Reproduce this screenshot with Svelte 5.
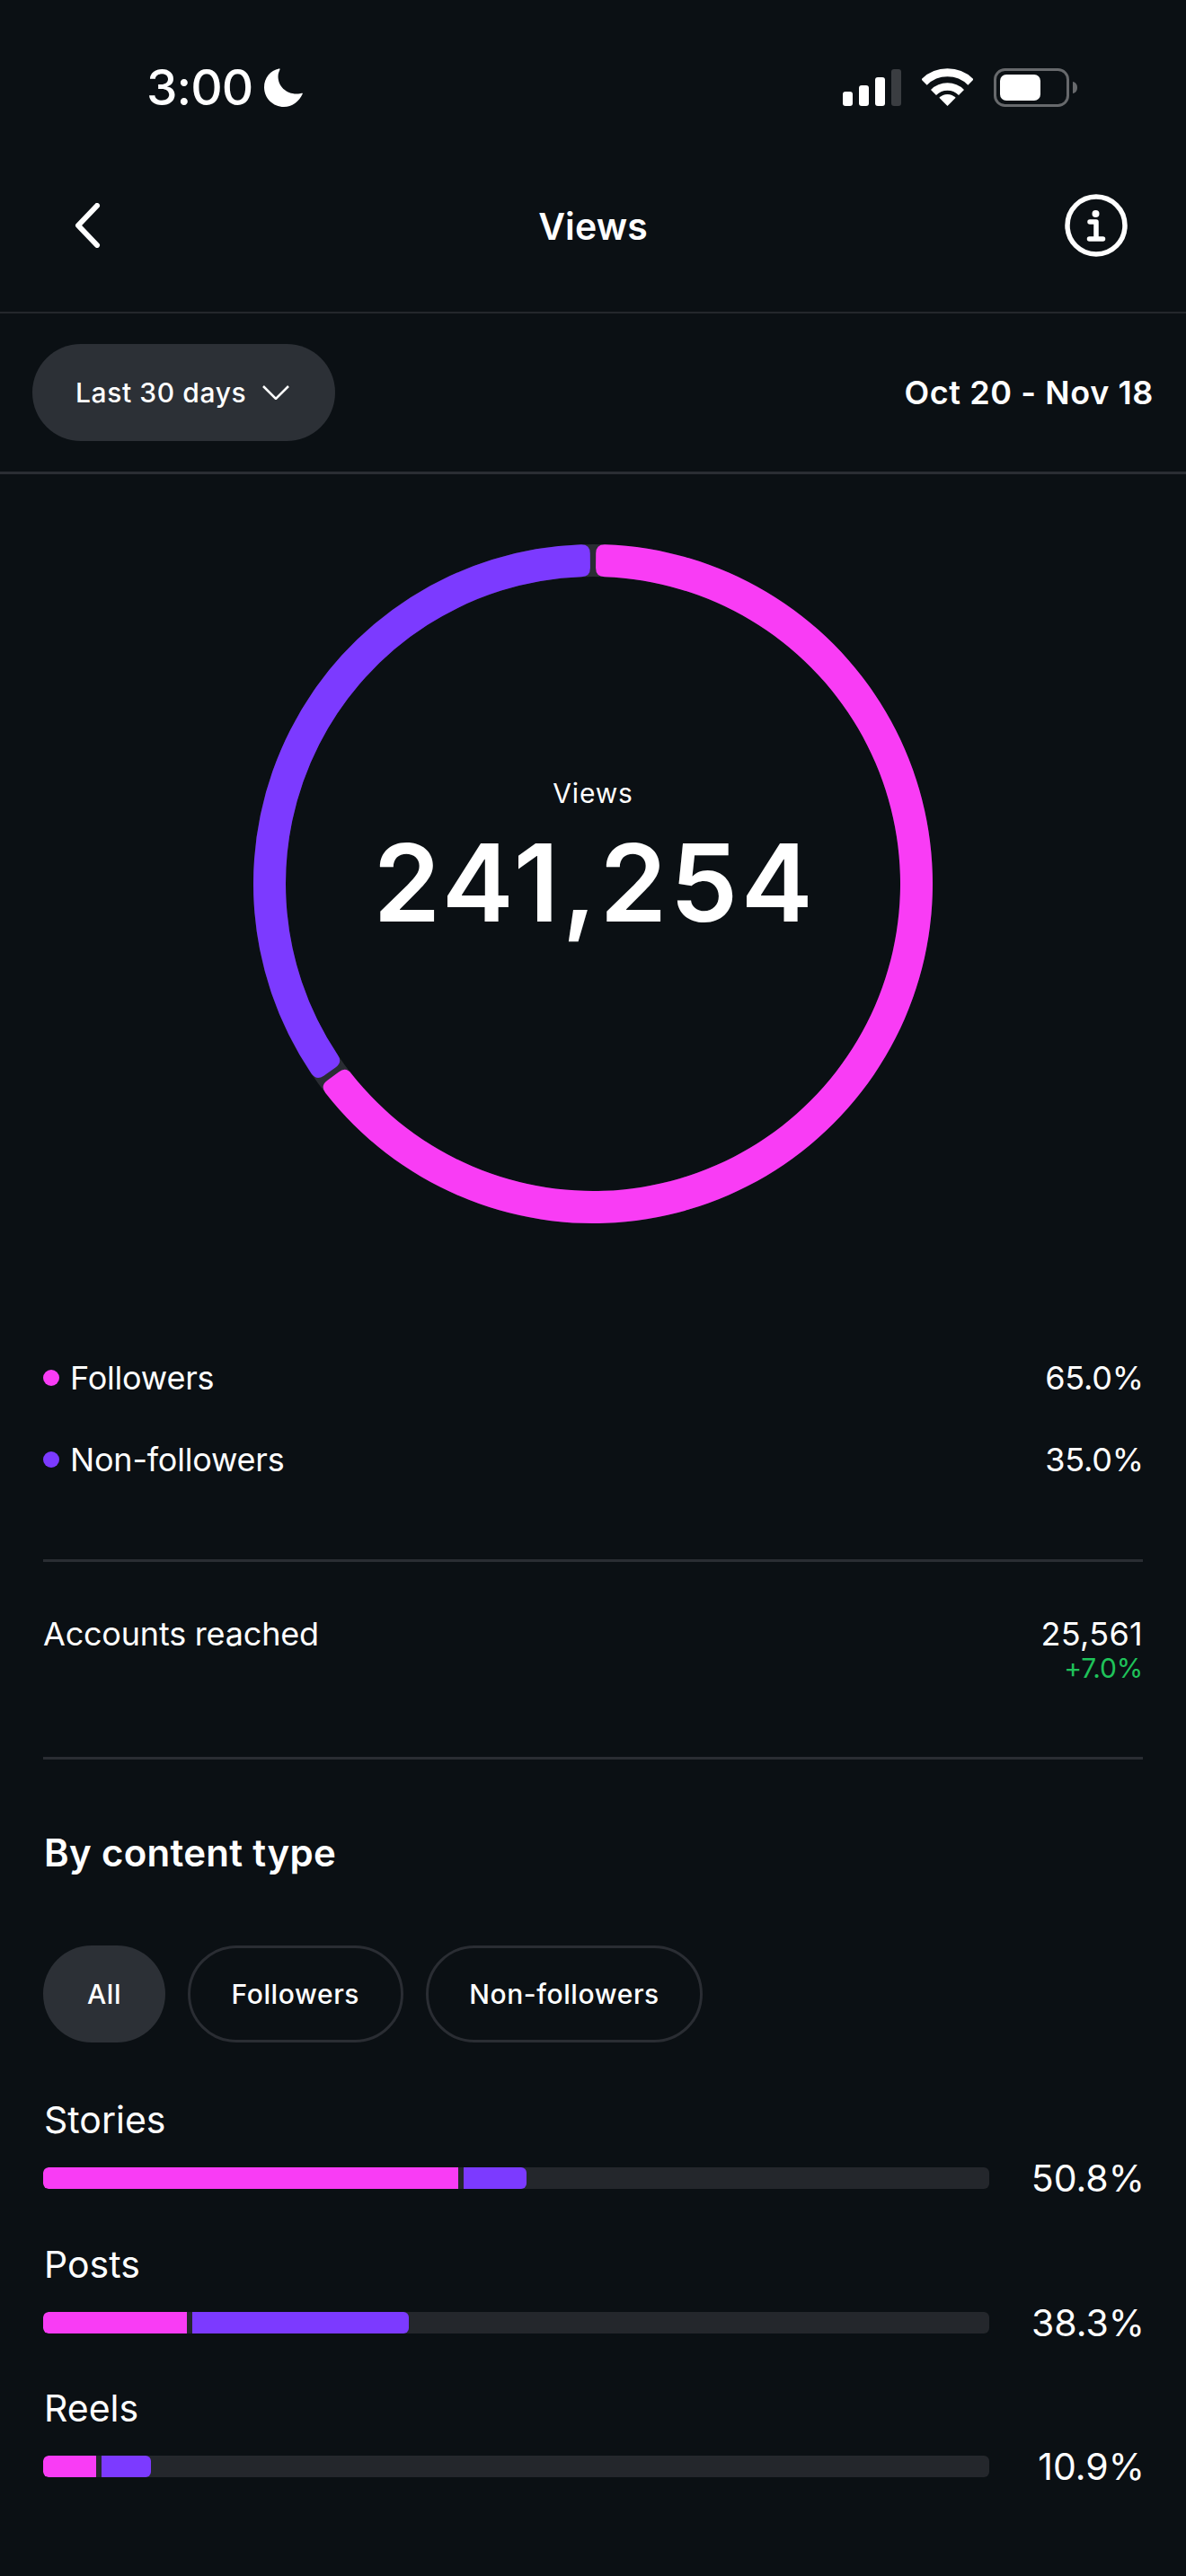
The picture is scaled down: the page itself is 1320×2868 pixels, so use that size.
<script>
  const C = 378, Ro = 378, Ri = 342, r = 10;
  const P = (R, a) => {
    const t = (a * Math.PI) / 180;
    return `${(C + R * Math.sin(t)).toFixed(2)} ${(C - R * Math.cos(t)).toFixed(2)}`;
  };
  function seg(a0, a1) {
    const cO = (r / Ro) * (180 / Math.PI), cI = (r / Ri) * (180 / Math.PI);
    const large = a1 - a0 > 180 ? 1 : 0;
    return `M${P(Ro, a0 + cO)}A${Ro} ${Ro} 0 ${large} 1 ${P(Ro, a1 - cO)}Q${P(Ro, a1)} ${P(Ro - r, a1)}L${P(Ri + r, a1)}Q${P(Ri, a1)} ${P(Ri, a1 - cI)}A${Ri} ${Ri} 0 ${large} 0 ${P(Ri, a0 + cI)}Q${P(Ri, a0)} ${P(Ri + r, a0)}L${P(Ro - r, a0)}Q${P(Ro, a0)} ${P(Ro, a0 + cO)}Z`;
  }
  const pinkSeg = seg(0.5, 233.5);
  const purpleSeg = seg(234.5, 359.5);
  const legend = [
    { label: 'Followers', value: '65.0%', cls: 'pink' },
    { label: 'Non-followers', value: '35.0%', cls: 'purple' }
  ];
  const rows = [
    { label: 'Stories', value: '50.8%', a: 462, b: 70 },
    { label: 'Posts', value: '38.3%', a: 160, b: 241 },
    { label: 'Reels', value: '10.9%', a: 59, b: 55 }
  ];
</script>

<main class="screen">
  <header class="status">
    <div class="time">
      <span>3:00</span>
      <svg width="43" height="43" viewBox="0 0 43 43"><path fill="#fff" d="M16.5.5C7 2.5 0 10.5 0 21c0 12.5 10 22 22 22 9 0 17-6 21-15-1.500-1-3 .5-7 .5-11.500 0-20.500-8.500-20.500-19.500 0-3.500 1.500-6 2-7.500 0-1-.500-1.500-1-1z"/></svg>
    </div>
    <div class="sys">
      <svg class="signal" width="65" height="41" viewBox="0 0 65 41">
        <rect x="0" y="25" width="11" height="16" rx="3" fill="#fff"/>
        <rect x="18" y="18" width="11" height="23" rx="3" fill="#fff"/>
        <rect x="36" y="9" width="11" height="32" rx="3" fill="#fff"/>
        <rect x="54" y="0" width="11" height="41" rx="3" fill="#3a3d41"/>
      </svg>
      <svg class="wifi" width="57" height="42" viewBox="0 0 57 42" fill="none">
        <path d="M2.500 15.500A37 37 0 0 1 54.500 15.500" stroke="#fff" stroke-width="9"/>
        <path d="M13 27A22 22 0 0 1 44 27" stroke="#fff" stroke-width="8.500"/>
        <path d="M28.500 42L19.300 32.800A13 13 0 0 1 37.700 32.800Z" fill="#fff"/>
      </svg>
      <svg class="battery" width="93" height="43" viewBox="0 0 93 43">
        <rect x="1.500" y="1.500" width="81" height="40" rx="11" fill="none" stroke="#67696c" stroke-width="3"/>
        <rect x="7" y="7" width="45" height="29" rx="7" fill="#fff"/>
        <path d="M88 15c3 .5 5 3 5 6.500s-2 6-5 6.500z" fill="#67696c"/>
      </svg>
    </div>
  </header>

  <nav class="nav">
    <svg class="back" width="30" height="50" viewBox="0 0 30 50" fill="none"><path d="M25 3L4 25l21 22" stroke="#fff" stroke-width="6" stroke-linecap="round" stroke-linejoin="round"/></svg>
    <h1>Views</h1>
    <svg class="info" width="70" height="70" viewBox="0 0 70 70" fill="none">
      <circle cx="35" cy="35" r="32" stroke="#fff" stroke-width="5.500"/>
      <circle cx="34.500" cy="22" r="4" fill="#fff"/>
      <path d="M28 31h7v19M27.500 50h15" stroke="#fff" stroke-width="5.500" stroke-linecap="round" stroke-linejoin="round"/>
    </svg>
  </nav>

  <section class="filter">
    <button class="pill select">
      Last 30 days
      <svg width="30" height="16" viewBox="0 0 30 16" fill="none"><path d="M1 1l14 14L29 1" stroke="#fff" stroke-width="2.500"/></svg>
    </button>
    <span class="range">Oct 20 - Nov 18</span>
  </section>

  <section class="ringwrap">
    <div class="ring">
      <svg width="756" height="756" viewBox="0 0 756 756">
        <circle cx="378" cy="378" r="360" fill="none" stroke="#2a2d33" stroke-width="36"/>
        <path d={pinkSeg} class="f-pink"/>
        <path d={purpleSeg} class="f-purple"/>
      </svg>
      <div class="center">
        <span class="c-label">Views</span>
        <span class="c-num">241,254</span>
      </div>
    </div>
  </section>

  <section class="legend">
    {#each legend as l}
      <div class="lrow">
        <span class="lname"><i class="dot {l.cls}"></i>{l.label}</span>
        <span>{l.value}</span>
      </div>
    {/each}
  </section>

  <section class="reach">
    <span>Accounts reached</span>
    <div class="reach-v">
      <span class="reach-num">25,561</span>
      <span class="delta">+7.0%</span>
    </div>
  </section>

  <section class="types">
    <h2>By content type</h2>
    <div class="chips">
      <button class="pill chip active">All</button>
      <button class="pill chip">Followers</button>
      <button class="pill chip">Non-followers</button>
    </div>
    <div class="bars">
      {#each rows as row}
        <div class="bar-row">
          <div class="bar-label">{row.label}</div>
          <div class="bar-line">
            <div class="track">
              <div class="fill pink" style="width:{row.a}px"></div>
              <div class="fill purple" style="width:{row.b}px"></div>
            </div>
            <span class="pct">{row.value}</span>
          </div>
        </div>
      {/each}
    </div>
  </section>
</main>

<style>
  :global(body) { margin: 0; background: #0b1014; }
  .screen {
    width: 1320px; height: 2868px; overflow: hidden; background: #0b1014; color: #fff;
    font-family: Inter, "Liberation Sans", sans-serif; font-size: 36px; letter-spacing: -0.2px; box-sizing: border-box;
  }
  .status {
    height: 154px; padding: 40px 121px 0 163px; box-sizing: border-box;
    display: flex; align-items: center; justify-content: space-between;
  }
  .time { display: flex; align-items: center; gap: 13px; font-size: 55px; font-weight: 500; letter-spacing: -1px; }
  .sys { display: flex; align-items: center; gap: 23px; }
  .nav {
    height: 195px; padding: 0 65px; box-sizing: border-box; display: grid; grid-template-columns: 1fr auto 1fr; align-items: center;
    border-bottom: 2px solid #24272c; 
  }
  .nav h1 { margin: 2px 0 0; font-size: 41px; font-weight: 600; letter-spacing: 0.1px; }
  .back { margin-left: 18px; }
  .info { justify-self: end; margin-top: 1px; }
  .filter {
    height: 179px; padding: 0 36px; box-sizing: border-box; display: flex; align-items: center;
    justify-content: space-between; border-bottom: 3px solid #2a2d33;
  }
  .pill {
    height: 108px; border-radius: 54px; font: inherit; color: #fff; font-size: 30px; font-weight: 500;
    display: inline-flex; align-items: center; box-sizing: border-box; letter-spacing: 0.6px;
  }
  .select { width: 337px; padding: 0 0 0 48px; gap: 18px; background: #2c3036; border: 0; }
  .range { font-size: 36px; font-weight: 600; letter-spacing: 0.6px; }
  .ringwrap { padding-top: 78px; display: flex; justify-content: center; }
  .ring { display: grid; width: 756px; height: 756px; }
  .ring > * { grid-area: 1 / 1; }
  .f-pink { fill: #f93cf5; }
  .f-purple { fill: #7c3aff; }
  .center { display: flex; flex-direction: column; align-items: center; padding-top: 259px; }
  .c-label { font-size: 30px; line-height: 36px; letter-spacing: 0.8px; }
  .c-num { font-size: 120px; font-weight: 600; line-height: 140px; margin-top: 12px; letter-spacing: 3.500px; margin-right: -3.500px; }
  .legend { padding: 126px 47px 0 48px; height: 374px; box-sizing: border-box; }
  .lrow { display: flex; justify-content: space-between; align-items: center; height: 91px; }
  .lname { display: flex; align-items: center; gap: 12px; }
  .dot { width: 18px; height: 18px; border-radius: 50%; }
  .pink { background: #f93cf5; }
  .purple { background: #7c3aff; }
  .reach {
    margin: 0 48px; height: 223px; padding: 58px 0 0 0; box-sizing: border-box; display: flex; justify-content: space-between;
    border-top: 3px solid #2a2d33; border-bottom: 3px solid #2a2d33; line-height: 44px;
  }
  .reach-v { display: flex; flex-direction: column; align-items: flex-end; }
  .reach-num { letter-spacing: 0.3px; }
  .delta { color: #1fc35a; font-size: 30px; line-height: 34px; margin-top: -1px; }
  .types { padding: 0 46px 0 48px; }
  h2 { margin: 80px 0 0 1px; font-size: 42px; font-weight: 600; line-height: 48px; letter-spacing: 0.3px; }
  .chips { display: flex; gap: 25px; margin-top: 79px; }
  .chip { background: none; border: 3px solid #2a2d33; padding: 0 45.500px; }
  .chip.active { background: #2c3036; border: 0; width: 136px; justify-content: center; }
  .bars { margin-top: 62px; display: flex; flex-direction: column; }
  .bar-row { height: 160.5px; }
  .bar-label { font-size: 41px; line-height: 48px; letter-spacing: 0; padding-left: 1px; }
  .bar-line { display: flex; align-items: center; justify-content: space-between; margin-top: 29px; height: 24px; }
  .track { width: 1053px; height: 24px; border-radius: 6px; background: #24272c; display: flex; gap: 6px; overflow: hidden; }
  .fill { height: 24px; }
  .fill.pink { border-radius: 6px 0 0 6px; }
  .fill.purple { border-radius: 0 6px 6px 0; }
  .pct { font-size: 41px; line-height: 48px; letter-spacing: 0; }
</style>
